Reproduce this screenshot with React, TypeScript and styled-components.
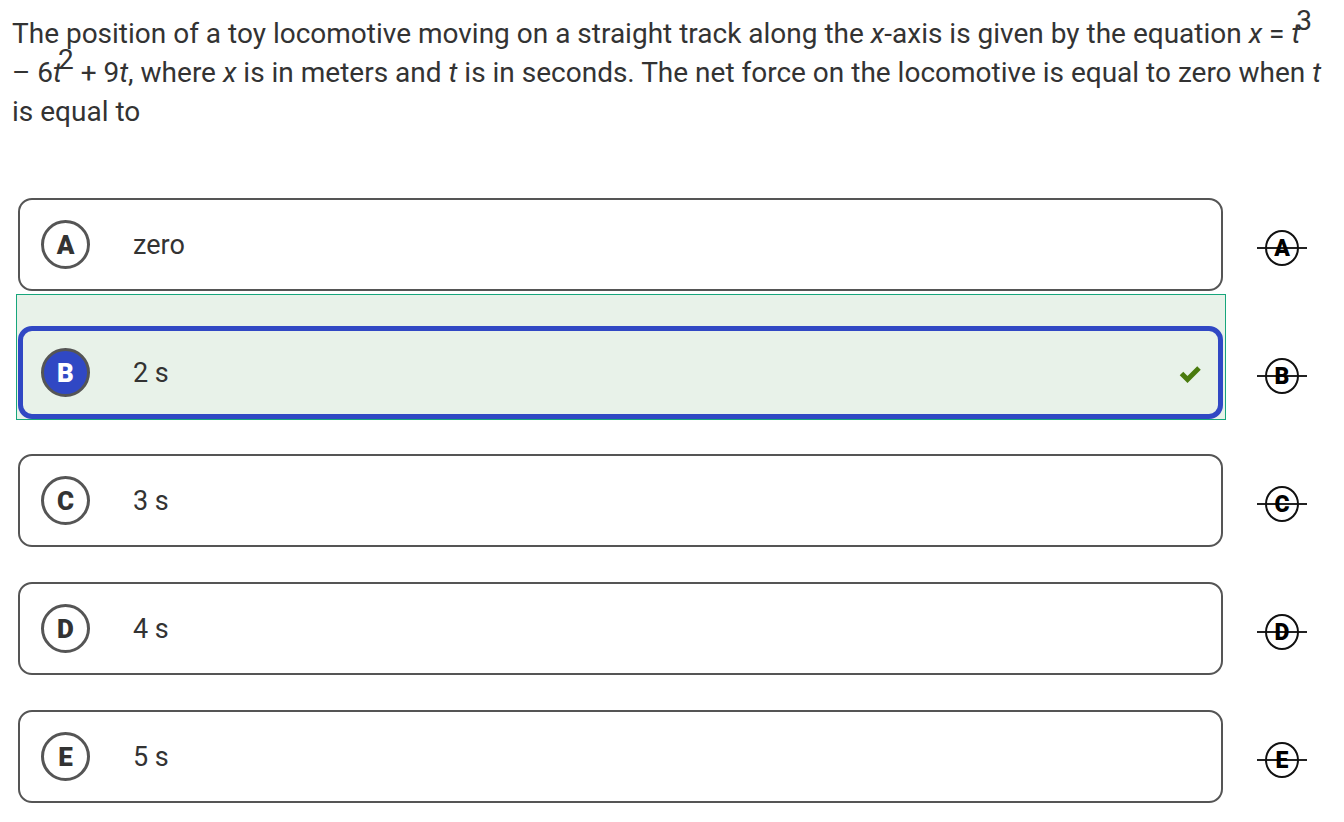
import styled, { createGlobalStyle } from 'styled-components';

const GlobalStyle = createGlobalStyle`
	body {
		margin: 0;
		background: #fff;
		font-family: Roboto, "Liberation Sans", sans-serif;
		color: #333;
	}
`;

const Page = styled.div`
	padding: 14px 12px 0 12px;
`;

const Question = styled.p`
	margin: 0;
	font-size: 28px;
	line-height: 39px;
	color: #333;
`;

const Sup = styled.span`
	position: relative;
	top: -0.45em;
	margin-left: -4px;
`;

const Choices = styled.div`
	margin-top: 35px;
	padding-left: 4px;
	display: flex;
	flex-direction: column;
`;

const Row = styled.div`
	display: flex;
	align-items: flex-end;
	height: 128px;
`;

const CardSlot = styled.div<{ $selected?: boolean }>`
	width: 1210px;
	box-sizing: border-box;
	height: ${p => (p.$selected ? '126px' : '125px')};
	padding: ${p => (p.$selected ? '31px 2px 2px 1px' : '32px 3px 0 2px')};
	border: ${p => (p.$selected ? '1px solid #17a67c' : 'none')};
	background: ${p => (p.$selected ? '#e8f2e9' : 'transparent')};
	margin-bottom: ${p => (p.$selected ? '2px' : '3px')};
`;

const Card = styled.div<{ $selected?: boolean }>`
	height: 93px;
	box-sizing: border-box;
	border: ${p => (p.$selected ? '5px solid #3048c4' : '2px solid #555')};
	border-radius: 14px;
	display: flex;
	align-items: center;
	padding-left: ${p => (p.$selected ? '18px' : '21px')};
	padding-right: ${p => (p.$selected ? '16px' : '19px')};
`;

const Badge = styled.div<{ $selected?: boolean }>`
	width: 49px;
	height: 49px;
	box-sizing: border-box;
	border-radius: 50%;
	border: 3px solid #555;
	background: ${p => (p.$selected ? '#3048c4' : '#fff')};
	color: ${p => (p.$selected ? '#fff' : '#333')};
	font-weight: 900;
	font-size: 26px;
	display: flex;
	align-items: center;
	justify-content: center;
	flex-shrink: 0;
`;

const Label = styled.span`
	margin-left: 43px;
	font-size: 27px;
	color: #333;
	flex: 1;
`;

const Check = styled.svg`
	width: 24px;
	height: 24px;
`;

const CrossOut = styled.button`
	margin-left: 31px;
	margin-bottom: 28px;
	width: 50px;
	height: 36px;
	padding: 0;
	border: none;
	background: transparent;
	position: relative;
	display: flex;
	align-items: center;
	justify-content: center;
	cursor: pointer;
	&::before {
		content: '';
		position: absolute;
		left: 0;
		right: 0;
		top: 17px;
		height: 2px;
		background: #222;
	}
`;

const CrossCircle = styled.span`
	width: 34px;
	height: 36px;
	box-sizing: border-box;
	border: 2px solid #111;
	border-radius: 50%;
	display: flex;
	align-items: center;
	justify-content: center;
	font-family: Roboto, "Liberation Sans", sans-serif;
	font-weight: 900;
	font-size: 23px;
	color: #000;
	position: relative;
`;

const options = [
	{ letter: 'A', text: 'zero' },
	{ letter: 'B', text: '2 s', selected: true },
	{ letter: 'C', text: '3 s' },
	{ letter: 'D', text: '4 s' },
	{ letter: 'E', text: '5 s' },
];

export default function App() {
	return (
		<Page>
			<GlobalStyle />
			<Question>
				The position of a toy locomotive moving on a straight track along the <i>x</i>-axis is given by the equation <i>x</i> = <i>t</i>
				<Sup>3</Sup> – 6<i>t</i>
				<Sup>2</Sup> + 9<i>t</i>, where <i>x</i> is in meters and <i>t</i> is in seconds. The net force on the locomotive is equal to zero when <i>t</i> is equal to
			</Question>
			<Choices>
				{options.map(o => (
					<Row key={o.letter}>
						<CardSlot $selected={o.selected}>
							<Card $selected={o.selected}>
								<Badge $selected={o.selected}>{o.letter}</Badge>
								<Label>{o.text}</Label>
								{o.selected && (
									<Check viewBox="0 0 24 24">
										<path d="M3.5 12.5 L9.5 18.5 L21 7" fill="none" stroke="#4a7b0e" strokeWidth="5" />
									</Check>
								)}
							</Card>
						</CardSlot>
						<CrossOut aria-label={`Cross out ${o.letter}`}>
							<CrossCircle>{o.letter}</CrossCircle>
						</CrossOut>
					</Row>
				))}
			</Choices>
		</Page>
	);
}
